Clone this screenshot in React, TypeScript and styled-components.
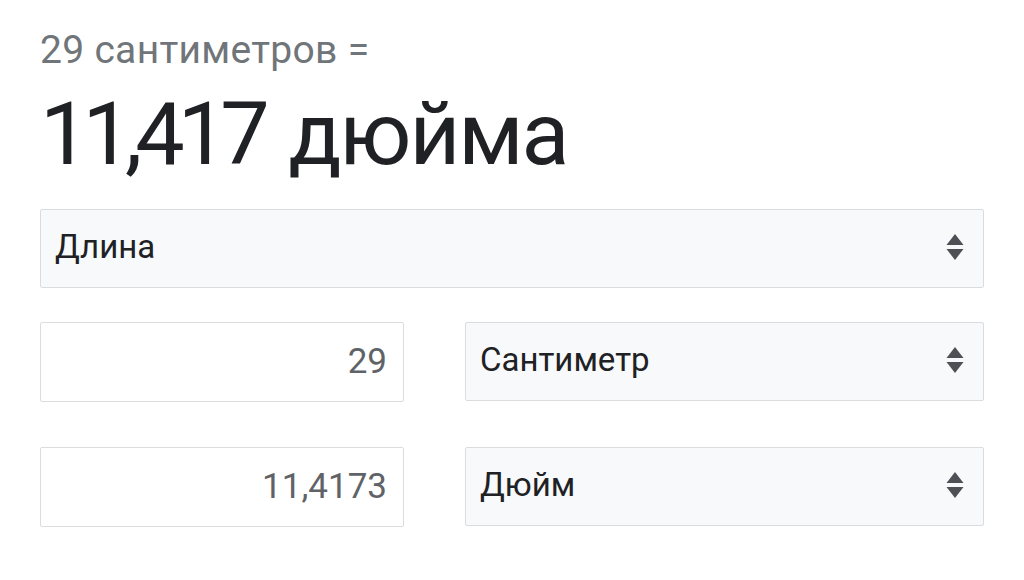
import React from 'react';
import styled, { createGlobalStyle } from 'styled-components';

const GlobalStyle = createGlobalStyle`
  html, body {
    margin: 0;
    padding: 0;
    background: #fff;
  }
  body {
    font-family: Roboto, 'Liberation Sans', Arial, sans-serif;
  }
`;

function ArrowsIcon() {
  return (
    <svg width='20' height='30' viewBox='0 0 20 30' aria-hidden='true'>
      <path d='M10 2 L18.5 13 L1.5 13 Z' fill='#4d5156' />
      <path d='M1.5 17 L18.5 17 L10 28 Z' fill='#4d5156' />
    </svg>
  );
}

interface SelectBoxProps {
  label: string;
}

function SelectBox({ label }: SelectBoxProps) {
  return (
    <Select>
      <SelectLabel>{label}</SelectLabel>
      <ArrowsIcon />
    </Select>
  );
}

function App() {
  return (
    <>
      <GlobalStyle />
      <Page>
        <Header>
          <Query>29 сантиметров =</Query>
          <Result>
            <ResultValue>11,417</ResultValue> дюйма
          </Result>
        </Header>
        <SelectBox label='Длина' />
        <Row $gap={34}>
          <NumberBox>29</NumberBox>
          <SelectBox label='Сантиметр' />
        </Row>
        <Row $gap={45}>
          <NumberBox>11,4173</NumberBox>
          <SelectBox label='Дюйм' />
        </Row>
      </Page>
    </>
  );
}

export default App;

const Page = styled.div`
  width: 1024px;
  height: 580px;
  box-sizing: border-box;
  padding: 26px 40px 0;
  display: flex;
  flex-direction: column;
`;

const Header = styled.div`
  display: flex;
  flex-direction: column;
  gap: 10px;
  margin-bottom: 25px;
`;

const Query = styled.div`
  font-size: 39px;
  line-height: 48px;
  letter-spacing: 0.3px;
  color: #70757a;
`;

const Result = styled.div`
  font-size: 88px;
  line-height: 100px;
  letter-spacing: -2px;
  word-spacing: 6px;
  color: #202124;
`;

const ResultValue = styled.span`
  letter-spacing: -7px;
`;

const Row = styled.div<{ $gap: number }>`
  margin-top: ${({ $gap }) => $gap}px;
  display: grid;
  grid-template-columns: 364px 1fr;
  column-gap: 61px;
`;

const Select = styled.div`
  height: 79px;
  box-sizing: border-box;
  padding: 0 18px 4px 14px;
  display: flex;
  align-items: center;
  justify-content: space-between;
  background: #f8f9fa;
  border: 1px solid #dadce0;
  border-radius: 2px;
`;

const SelectLabel = styled.span`
  font-size: 33px;
  color: #202124;
`;

const NumberBox = styled.div`
  height: 80px;
  box-sizing: border-box;
  padding: 0 16px 2px;
  display: flex;
  align-items: center;
  justify-content: flex-end;
  border: 1px solid #dadce0;
  border-radius: 2px;
  font-size: 35px;
  color: #5f6368;
`;
